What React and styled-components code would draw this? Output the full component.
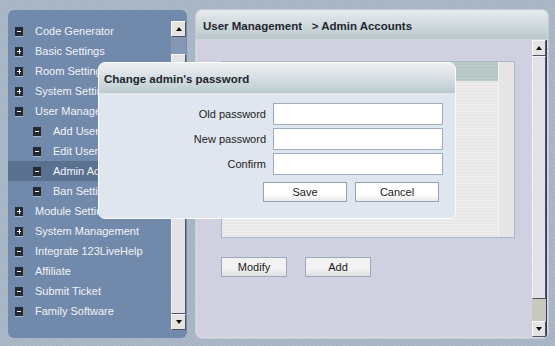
import React from 'react'
import styled, { createGlobalStyle } from 'styled-components'

const GlobalStyle = createGlobalStyle`
  html, body {
    margin: 0;
    padding: 0;
    background: #a6b4c4;
  }
  * { box-sizing: border-box; }
`

const dots = `repeating-linear-gradient(45deg, rgba(255,255,255,0.07) 0 1px, transparent 1px 3px)`

const Page = styled.div`
  position: relative;
  width: 555px;
  height: 346px;
  display: flex;
  align-items: flex-start;
  gap: 8px;
  padding: 10px 7px 8px 8px;
  font-family: "Liberation Sans", Arial, sans-serif;
  font-size: 11px;
  background: ${dots}, #a6b4c4;
  overflow: hidden;
`

const Sidebar = styled.div`
  width: 179px;
  height: 328px;
  flex: none;
  display: flex;
  padding: 11px 1px 8px 0;
  border-radius: 6px;
  background: #7189ab;
`

const NavList = styled.ul`
  list-style: none;
  margin: 0;
  padding: 0;
  flex: 1;
`

const NavRow = styled.li`
  height: 20px;
  display: flex;
  align-items: center;
  gap: 12px;
  padding-left: ${p => (p.$sub ? 25 : 7)}px;
  color: #f2f4f8;
  white-space: nowrap;
  overflow: hidden;
  background: ${p => (p.$active ? '#5a7190' : 'transparent')};
`

const Toggle = styled.span`
  position: relative;
  width: 8px;
  height: 9px;
  flex: none;
  background: #262a30;
  box-shadow: 0 1px 0 #a9b7c9;
  &::before {
    content: '';
    position: absolute;
    left: 2px;
    top: 4px;
    width: 4px;
    height: 1px;
    background: #fff;
  }
  &::after {
    content: '';
    display: ${p => (p.$plus ? 'block' : 'none')};
    position: absolute;
    left: 3.5px;
    top: 2px;
    width: 1px;
    height: 5px;
    background: #fff;
  }
`

const Scroll = styled.div`
  width: 15px;
  flex: none;
  display: flex;
  flex-direction: column;
  margin-top: ${p => p.$offset || 0}px;
  border-right: ${p => (p.$dark ? '1px solid #2e3f55' : 'none')};
`

const ArrowBtn = styled.div`
  height: 16px;
  flex: none;
  display: flex;
  align-items: center;
  justify-content: center;
  background: #e4e4e2;
  border: 1px solid;
  border-color: #fafafa #4b5563 #4b5563 #fafafa;
  &::after {
    content: '';
    border-left: 3px solid transparent;
    border-right: 3px solid transparent;
    ${p => (p.$down ? 'border-top: 4px solid #111;' : 'border-bottom: 4px solid #111;')}
  }
`

const Track = styled.div`
  height: ${p => p.$h}px;
  flex: none;
  background: ${p => p.$bg};
`

const Thumb = styled.div`
  flex: 1;
  background: ${dots}, #e2e2e6;
  border: 1px solid;
  border-color: #f4f4f4 #4b5563 #4b5563 #f4f4f4;
`

const Main = styled.div`
  width: 354px;
  height: 330px;
  margin-top: -1px;
  flex: none;
  display: flex;
  flex-direction: column;
  border-radius: 7px;
  border: 1px solid #c3ccd6;
  background: #d0d0e0;
  overflow: hidden;
`

const MainHeader = styled.div`
  height: 29px;
  flex: none;
  display: flex;
  align-items: center;
  padding: 3px 0 0 7px;
  font-weight: bold;
  font-size: 11.5px;
  color: #1f2630;
  background: linear-gradient(#e6eaee, #cdd7da 60%, #b9c8c9);
  white-space: pre;
`

const MainBody = styled.div`
  flex: 1;
  display: flex;
  border: 1px dotted #e6e6f0;
  border-top: none;
  border-radius: 0 0 7px 7px;
`

const Content = styled.div`
  flex: 1;
  padding: 22px 0 0 24px;
`

const TableBox = styled.div`
  width: 294px;
  height: 177px;
  display: grid;
  grid-template-columns: 1fr 16px;
  grid-template-rows: 19px 1fr;
  border: 1px solid #a9b7c6;
  background: repeating-linear-gradient(#ececec 0 2px, #e5e5e5 2px 3px);
`

const TableHead = styled.div`
  background: repeating-linear-gradient(#bccaca 0 2px, #b3c1c4 2px 3px);
`

const TableSide = styled.div`
  grid-row: span 2;
  grid-column: 2;
  background: #e6e6e6;
  border-left: 1px solid #f2f2f2;
`

const ButtonRow = styled.div`
  display: flex;
  gap: 18px;
  margin-top: 19px;
`

const Button = styled.button`
  width: ${p => p.$w || 66}px;
  height: 20px;
  padding: 0;
  font-family: "Liberation Sans", Arial, sans-serif;
  font-size: 11px;
  color: #1a1a1a;
  border: 1px solid ${p => (p.$light ? '#93a3b6' : '#9aaabb')};
  background: ${p => (p.$light
    ? 'linear-gradient(#ffffff 0 65%, #e8e8ea)'
    : 'linear-gradient(#f2f2f2 0 60%, #dedee0)')};
`

const Dialog = styled.div`
  position: absolute;
  left: 98px;
  top: 62px;
  width: 358px;
  height: 157px;
  display: flex;
  flex-direction: column;
  border: 1px solid #fbfcfd;
  border-radius: 7px;
  background: #dfe6ef;
  overflow: hidden;
`

const DialogHeader = styled.div`
  height: 30px;
  flex: none;
  display: flex;
  align-items: center;
  padding: 2px 0 0 5px;
  font-weight: bold;
  font-size: 11.5px;
  color: #1f2630;
  background: linear-gradient(#eef1f4, #d3dde0 55%, #bccacd);
`

const Form = styled.div`
  display: grid;
  grid-template-columns: 167px 170px;
  column-gap: 7px;
  row-gap: 3px;
  padding-top: 10px;
  align-items: center;
`

const Label = styled.label`
  text-align: right;
  color: #222;
`

const Input = styled.input`
  height: 22px;
  width: 170px;
  border: 1px solid #9dacbe;
  background: #fff;
`

const DialogActions = styled.div`
  display: flex;
  gap: 8px;
  padding: 7px 0 0 164px;
`

const items = [
  { label: 'Code Generator' },
  { label: 'Basic Settings', plus: true },
  { label: 'Room Settings', plus: true },
  { label: 'System Settings', plus: true },
  { label: 'User Management' },
  { label: 'Add User', sub: true },
  { label: 'Edit User', sub: true },
  { label: 'Admin Accounts', sub: true, active: true },
  { label: 'Ban Settings', sub: true },
  { label: 'Module Settings', plus: true },
  { label: 'System Management', plus: true },
  { label: 'Integrate 123LiveHelp' },
  { label: 'Affiliate' },
  { label: 'Submit Ticket' },
  { label: 'Family Software' },
]

export default function App() {
  return (
    <Page>
      <GlobalStyle />
      <Sidebar>
        <NavList>
          {items.map(it => (
            <NavRow key={it.label} $sub={it.sub} $active={it.active}>
              <Toggle $plus={it.plus} />
              {it.label}
            </NavRow>
          ))}
        </NavList>
        <Scroll>
          <ArrowBtn />
          <Track $h={17} $bg="#8497b4" />
          <Thumb />
          <ArrowBtn $down />
        </Scroll>
      </Sidebar>
      <Main>
        <MainHeader>User Management   &gt; Admin Accounts</MainHeader>
        <MainBody>
          <Content>
            <TableBox>
              <TableHead />
              <TableSide />
            </TableBox>
            <ButtonRow>
              <Button>Modify</Button>
              <Button>Add</Button>
            </ButtonRow>
          </Content>
          <Scroll $dark $offset={1}>
            <ArrowBtn />
            <Thumb />
            <Track $h={22} $bg="#c9c8bc" />
            <ArrowBtn $down />
          </Scroll>
        </MainBody>
      </Main>
      <Dialog>
        <DialogHeader>Change admin's password</DialogHeader>
        <Form>
          <Label>Old password</Label>
          <Input type="password" />
          <Label>New password</Label>
          <Input type="password" />
          <Label>Confirm</Label>
          <Input type="password" />
        </Form>
        <DialogActions>
          <Button $light $w={84}>Save</Button>
          <Button $light $w={84}>Cancel</Button>
        </DialogActions>
      </Dialog>
    </Page>
  )
}
